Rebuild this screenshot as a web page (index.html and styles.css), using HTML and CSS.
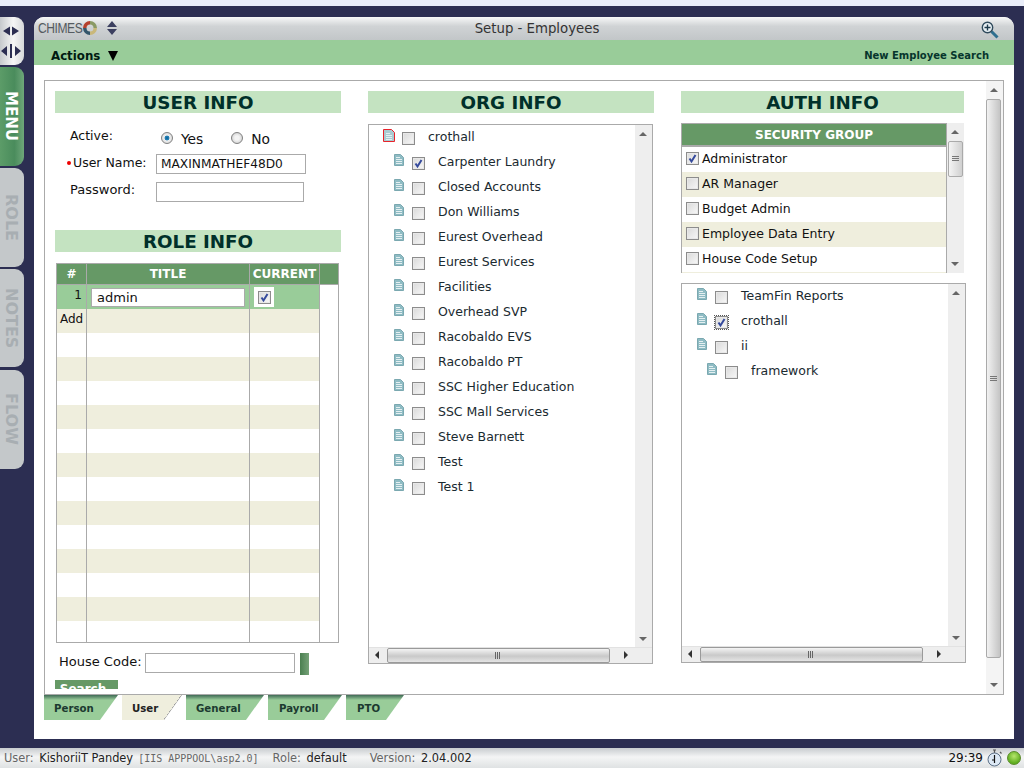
FILE: index.html
```html
<!DOCTYPE html>
<html lang="en">
<head>
  <meta charset="UTF-8" />
  <title>Setup - Employees</title>
  <link rel="stylesheet" href="styles.css">
</head>
<body>
  <svg class="defs" width="0" height="0">
    <symbol id="doc" viewBox="0 0 10 12">
      <path d="M.5.5h6l3 3v8H.5z" fill="#8fbcc4" stroke="#7aa8b0"/>
      <path d="M2 3.500h4M2 5.500h6M2 7.500h6M2 9.500h6" stroke="#e4eff1"/>
    </symbol>
    <symbol id="doc-red" viewBox="0 0 12 13">
      <path d="M.5.500h8l3 3v9H.5z" fill="#a9ccd2" stroke="#e8232a"/>
      <path d="M3 4.500h4M3 6.500h6M3 8.500h6M3 10.500h6" stroke="#e4eff1"/>
    </symbol>
    <symbol id="grip-v" viewBox="0 0 7 6">
      <path d="M0 .5h7M0 2.500h7M0 4.500h7" stroke="#777"/>
    </symbol>
    <symbol id="grip-h" viewBox="0 0 7 7">
      <path d="M.5 0v7M2.500 0v7M4.500 0v7" stroke="#666"/>
    </symbol>
  </svg>

  <div class="topstrip"></div>
  <div class="desk">
    <nav class="rail">
      <div class="rail-toggle">
        <svg width="20" height="10" viewBox="0 0 20 10"><path d="M2 5l7-4.500v9zM18 5l-7-4.500v9z" fill="#2c2e52"/></svg>
        <svg width="22" height="14" viewBox="0 0 22 14"><path d="M1 7l6-5v10zM21 7l-6-5v10z" fill="#2c2e52"/><path d="M11 0v14" stroke="#2c2e52" stroke-width="2"/></svg>
      </div>
      <div class="rail-tab rail-on"><span>MENU</span></div>
      <div class="rail-tab rail-role"><span>ROLE</span></div>
      <div class="rail-tab rail-notes"><span>NOTES</span></div>
      <div class="rail-tab rail-flow"><span>FLOW</span></div>
    </nav>

    <main class="window">
      <header class="titlebar">
        <div class="brand">
          <span class="brand-name">CHIMES</span>
          <svg width="14" height="14" viewBox="0 0 16 16" fill="none" stroke-width="4">
            <path d="M2 8a6 6 0 0 1 6-6" stroke="#b5402c"/>
            <path d="M8 2a6 6 0 0 1 6 6" stroke="#8a9a65"/>
            <path d="M14 8a6 6 0 0 1-6 6" stroke="#c9b87a"/>
            <path d="M8 14a6 6 0 0 1-6-6" stroke="#33566a"/>
          </svg>
          <svg class="brand-sort" width="12" height="16" viewBox="0 0 12 16"><path d="M6 1l5 6H1zM6 15l5-6H1z" fill="#3c4060"/></svg>
        </div>
        <div class="wintitle">Setup - Employees</div>
        <svg class="zoomicon" width="18" height="18" viewBox="0 0 18 18" fill="none">
          <path d="M10.500 10.500l6 6" stroke="#2f6f8f" stroke-width="3"/>
          <circle cx="6.500" cy="6.500" r="5.200" fill="#e8f0f4" stroke="#2f4a5c" stroke-width="1.400"/>
          <path d="M6.500 3.500v6M3.500 6.500h6" stroke="#1d3a4c" stroke-width="1.400"/>
        </svg>
      </header>
      <div class="actionbar">
        <div class="actions">Actions <span class="caret"></span></div>
        <a class="newsearch">New Employee Search</a>
      </div>

      <div class="content">
        <section class="panel">
          <div class="col col-user">
            <h2 class="sect">USER INFO</h2>
            <div class="field field-active">
              <label class="lbl">Active:</label>
              <span class="radio radio-on"></span><span class="radio-txt">Yes</span>
              <span class="radio radio-no"></span><span class="radio-txt">No</span>
            </div>
            <div class="field field-name">
              <label class="lbl"><i class="req"></i>User Name:</label>
              <input class="txt txt-name" type="text" value="MAXINMATHEF48D0">
            </div>
            <div class="field field-pass">
              <label class="lbl">Password:</label>
              <input class="txt txt-pass" type="text">
            </div>

            <h2 class="sect sect-role">ROLE INFO</h2>
            <div class="grid">
              <div class="gh"><div class="c-num">#</div><div class="c-title">TITLE</div><div class="c-cur">CURRENT</div><div class="c-end"></div></div>
              <div class="gr gr-sel"><div class="c-num num-right">1</div><div class="c-title"><input class="title-in" type="text" value="admin"></div><div class="c-cur"><span class="curbox"><input class="chk" type="checkbox" checked></span></div></div>
              <div class="gr gr-alt"><div class="c-num">Add</div><div class="c-title"></div><div class="c-cur"></div></div>
              <div class="gr"><div class="c-num"></div><div class="c-title"></div><div class="c-cur"></div></div>
              <div class="gr gr-alt"><div class="c-num"></div><div class="c-title"></div><div class="c-cur"></div></div>
              <div class="gr"><div class="c-num"></div><div class="c-title"></div><div class="c-cur"></div></div>
              <div class="gr gr-alt"><div class="c-num"></div><div class="c-title"></div><div class="c-cur"></div></div>
              <div class="gr"><div class="c-num"></div><div class="c-title"></div><div class="c-cur"></div></div>
              <div class="gr gr-alt"><div class="c-num"></div><div class="c-title"></div><div class="c-cur"></div></div>
              <div class="gr"><div class="c-num"></div><div class="c-title"></div><div class="c-cur"></div></div>
              <div class="gr gr-alt"><div class="c-num"></div><div class="c-title"></div><div class="c-cur"></div></div>
              <div class="gr"><div class="c-num"></div><div class="c-title"></div><div class="c-cur"></div></div>
              <div class="gr gr-alt"><div class="c-num"></div><div class="c-title"></div><div class="c-cur"></div></div>
              <div class="gr"><div class="c-num"></div><div class="c-title"></div><div class="c-cur"></div></div>
              <div class="gr gr-alt"><div class="c-num"></div><div class="c-title"></div><div class="c-cur"></div></div>
              <div class="gr gr-last"><div class="c-num"></div><div class="c-title"></div><div class="c-cur"></div></div>
            </div>
            <div class="house">
              <label class="lbl">House Code:</label>
              <input class="txt txt-house" type="text">
              <span class="housebtn"></span>
            </div>
            <div class="searchbtn">Search</div>
          </div>

          <div class="col col-org">
            <h2 class="sect">ORG INFO</h2>
            <div class="treebox tree-org">
              <div class="tree">
                <div class="node node-root"><svg class="doc" width="12" height="13"><use href="#doc-red"/></svg><input class="chk" type="checkbox"><span>crothall</span></div>
                <div class="node"><svg class="doc" width="10" height="12"><use href="#doc"/></svg><input class="chk" type="checkbox" checked><span>Carpenter Laundry</span></div>
                <div class="node"><svg class="doc" width="10" height="12"><use href="#doc"/></svg><input class="chk" type="checkbox"><span>Closed Accounts</span></div>
                <div class="node"><svg class="doc" width="10" height="12"><use href="#doc"/></svg><input class="chk" type="checkbox"><span>Don Williams</span></div>
                <div class="node"><svg class="doc" width="10" height="12"><use href="#doc"/></svg><input class="chk" type="checkbox"><span>Eurest Overhead</span></div>
                <div class="node"><svg class="doc" width="10" height="12"><use href="#doc"/></svg><input class="chk" type="checkbox"><span>Eurest Services</span></div>
                <div class="node"><svg class="doc" width="10" height="12"><use href="#doc"/></svg><input class="chk" type="checkbox"><span>Facilities</span></div>
                <div class="node"><svg class="doc" width="10" height="12"><use href="#doc"/></svg><input class="chk" type="checkbox"><span>Overhead SVP</span></div>
                <div class="node"><svg class="doc" width="10" height="12"><use href="#doc"/></svg><input class="chk" type="checkbox"><span>Racobaldo EVS</span></div>
                <div class="node"><svg class="doc" width="10" height="12"><use href="#doc"/></svg><input class="chk" type="checkbox"><span>Racobaldo PT</span></div>
                <div class="node"><svg class="doc" width="10" height="12"><use href="#doc"/></svg><input class="chk" type="checkbox"><span>SSC Higher Education</span></div>
                <div class="node"><svg class="doc" width="10" height="12"><use href="#doc"/></svg><input class="chk" type="checkbox"><span>SSC Mall Services</span></div>
                <div class="node"><svg class="doc" width="10" height="12"><use href="#doc"/></svg><input class="chk" type="checkbox"><span>Steve Barnett</span></div>
                <div class="node"><svg class="doc" width="10" height="12"><use href="#doc"/></svg><input class="chk" type="checkbox"><span>Test</span></div>
                <div class="node"><svg class="doc" width="10" height="12"><use href="#doc"/></svg><input class="chk" type="checkbox"><span>Test 1</span></div>
              </div>
              <div class="sb-v"><span class="arr arr-up"></span><span class="arr arr-dn"></span></div>
              <div class="sb-h">
                <span class="arr arr-lt"></span>
                <div class="h-thumb"><svg width="7" height="7"><use href="#grip-h"/></svg></div>
                <span class="arr arr-rt"></span>
              </div>
            </div>
          </div>

          <div class="col col-auth">
            <h2 class="sect">AUTH INFO</h2>
            <div class="secgroup">
              <div class="secmain">
                <div class="sechead">SECURITY GROUP</div>
                <div class="secrow"><input class="chk chk-flat" type="checkbox" checked><span>Administrator</span></div>
                <div class="secrow secrow-alt"><input class="chk chk-flat" type="checkbox"><span>AR Manager</span></div>
                <div class="secrow"><input class="chk chk-flat" type="checkbox"><span>Budget Admin</span></div>
                <div class="secrow secrow-alt"><input class="chk chk-flat" type="checkbox"><span>Employee Data Entry</span></div>
                <div class="secrow"><input class="chk chk-flat" type="checkbox"><span>House Code Setup</span></div>
                <div class="secrow-peek"></div>
              </div>
              <div class="sb-sec">
                <span class="arr arr-up"></span>
                <div class="sec-thumb"><svg width="7" height="6"><use href="#grip-v"/></svg></div>
                <span class="arr arr-dn"></span>
              </div>
            </div>
            <div class="treebox tree-auth">
              <div class="tree">
                <div class="node"><svg class="doc" width="10" height="12"><use href="#doc"/></svg><input class="chk" type="checkbox"><span>TeamFin Reports</span></div>
                <div class="node"><svg class="doc" width="10" height="12"><use href="#doc"/></svg><input class="chk chk-focus" type="checkbox" checked><span>crothall</span></div>
                <div class="node"><svg class="doc" width="10" height="12"><use href="#doc"/></svg><input class="chk" type="checkbox"><span>ii</span></div>
                <div class="node node-sub"><svg class="doc" width="10" height="12"><use href="#doc"/></svg><input class="chk" type="checkbox"><span>framework</span></div>
              </div>
              <div class="sb-v"><span class="arr arr-up"></span><span class="arr arr-dn"></span></div>
              <div class="sb-h">
                <span class="arr arr-lt"></span>
                <div class="h-thumb"><svg width="7" height="7"><use href="#grip-h"/></svg></div>
                <span class="arr arr-rt"></span>
              </div>
            </div>
          </div>

          <div class="sb-main">
            <span class="arr arr-up"></span>
            <div class="main-thumb"><svg width="7" height="6"><use href="#grip-v"/></svg></div>
            <span class="arr arr-dn"></span>
          </div>
        </section>

        <div class="tabs">
          <div class="tab tab-person">Person</div>
          <div class="tab tab-on">User</div>
          <div class="tab tab-general">General</div>
          <div class="tab tab-payroll">Payroll</div>
          <div class="tab tab-pto">PTO</div>
        </div>
      </div>
    </main>
  </div>

  <footer class="status">
    <span class="st-user"><em>User:</em> KishoriiT Pandey</span>
    <span class="st-pool">[IIS APPPOOL\asp2.0]</span>
    <span class="st-role"><em>Role:</em> default</span>
    <span class="st-ver"><em>Version:</em> 2.04.002</span>
    <span class="st-right">
      <span class="st-time">29:39</span>
      <svg width="16" height="18" viewBox="0 0 16 18" fill="none">
        <path d="M6 1h3M7.500 1v3M13 3l1.500 1.500" stroke="#555" stroke-width="1.200"/>
        <circle cx="7.500" cy="10.500" r="6.500" fill="#dce8f4" stroke="#5b6f86"/>
        <path d="M7.500 6v5M5 11h3M7.500 11v3" stroke="#111" stroke-width="1.200"/>
      </svg>
      <span class="led"></span>
    </span>
  </footer>
</body>
</html>
```

FILE: styles.css
```css
* {
  box-sizing: border-box;
}
html, body {
  height: 100%;
}
body {
  margin: 0;
  height: 768px;
  overflow: hidden;
  background: #2c2e52;
  font-family: "DejaVu Sans", Verdana, sans-serif;
  font-size: 12px;
  color: #111;
  display: flex;
  flex-direction: column;
}
.defs {
  display: block;
  height: 0;
}
.topstrip {
  height: 6px;
  background: #e9edf9;
  flex: none;
}
.desk {
  height: 742px;
  flex: none;
  padding-top: 11px;
  display: flex;
}

/* left rail */
.rail {
  width: 34px;
  flex: none;
  display: flex;
  flex-direction: column;
}
.rail-toggle {
  width: 24px;
  height: 48px;
  border-radius: 0 9px 9px 0;
  background: linear-gradient(90deg, #c6c9cc, #f6f6f6 55%, #d6d8da);
  display: flex;
  flex-direction: column;
  align-items: center;
  justify-content: center;
  gap: 8px;
  padding: 2px 3px 0 0;
}
.rail-tab {
  width: 24px;
  height: 99px;
  margin-top: 2px;
  border-radius: 0 9px 9px 0;
  background: #c4c8ca;
  display: flex;
  justify-content: center;
  padding-top: 24px;
  padding-right: 2px;
}
.rail-tab span {
  writing-mode: vertical-rl;
  font-weight: bold;
  font-size: 16px;
  color: #a8aeb2;
  line-height: 16px;
}
.rail-role {
  padding-top: 26px;
}
.rail-notes {
  height: 98px;
  padding-top: 19px;
}
.rail-flow {
  margin-top: 3px;
  padding-top: 23px;
}
.rail-on {
  background: linear-gradient(90deg, #5c9c68, #4a8c5c 60%, #6ea67a);
}
.rail-on span {
  color: #fff;
  font-size: 15px;
}

/* window */
.window {
  width: 980px;
  height: 722px;
  background: #fff;
  border-radius: 10px 10px 0 0;
  display: flex;
  flex-direction: column;
}
.titlebar {
  height: 23px;
  flex: none;
  border-radius: 10px 10px 0 0;
  background: linear-gradient(180deg, #f7f8f8 0, #d0d3d5 40%, #c2c6c8 100%);
  position: relative;
  display: flex;
  align-items: center;
  justify-content: center;
}
.brand {
  position: absolute;
  left: 4px;
  top: 3px;
  display: flex;
  align-items: center;
  gap: 1px;
}
.brand-name {
  font-family: "Liberation Sans", Arial, sans-serif;
  font-size: 14px;
  letter-spacing: -0.5px;
  color: #555b60;
  transform: scaleX(0.86);
  transform-origin: left center;
  margin-right: -7px;
}
.brand-sort {
  margin-left: 8px;
}
.wintitle {
  font-size: 13.300px;
  color: #333;
  margin-left: 26px;
}
.zoomicon {
  position: absolute;
  right: 15px;
  top: 4px;
}
.actionbar {
  height: 25px;
  flex: none;
  background: #99cc99;
  display: flex;
  align-items: center;
  justify-content: space-between;
  padding: 5px 25px 0 17px;
}
.actions {
  font-weight: bold;
  font-size: 11.800px;
  color: #001a10;
  display: flex;
  align-items: center;
  gap: 8px;
  margin-top: 1px;
}
.caret {
  width: 0;
  height: 0;
  border-left: 5px solid transparent;
  border-right: 5px solid transparent;
  border-top: 10px solid #000;
}
.newsearch {
  font-weight: bold;
  font-size: 10px;
  color: #06352c;
}

.content {
  flex: 1;
  padding: 15px 10px 0;
}
.panel {
  height: 615px;
  border: 1px solid #aaa;
  position: relative;
  display: flex;
  overflow: hidden;
  padding: 10px 0 0 10px;
}
.col {
  flex: none;
}
.col-user {
  width: 286px;
  height: 598px;
  overflow: hidden;
  margin-right: 27px;
}
.col-org {
  width: 286px;
  margin-right: 27px;
}
.col-auth {
  width: 285px;
}
.sect {
  margin: 0;
  height: 22px;
  line-height: 24px;
  background: #c4e3c1;
  text-align: center;
  font-size: 18.300px;
  font-weight: bold;
  color: #00302a;
}
.col-auth .sect {
  width: 283px;
}

/* user info */
.field {
  display: flex;
  align-items: center;
}
.lbl {
  font-size: 13px;
  color: #111;
}
.field-active {
  margin-top: 14px;
  height: 20px;
  padding-left: 15px;
}
.field-active .lbl {
  width: 91px;
  font-size: 12.500px;
  margin-top: -3px;
}
.radio {
  width: 12px;
  height: 12px;
  border-radius: 50%;
  border: 1px solid #808080;
  background: radial-gradient(circle, #f4f4f4 30%, #c4c4c4 100%);
  margin-top: 1px;
}
.radio-on {
  background: radial-gradient(circle, #0a5f96 0, #2a87bb 32%, #f0f0f0 38%, #cfcfcf 100%);
}
.radio-no {
  margin-left: 28px;
}
.radio-txt {
  font-size: 13.800px;
  margin-left: 8px;
  margin-top: 3px;
}
.field-name {
  margin-top: 7px;
  height: 20px;
  padding-left: 12px;
}
.field-name .lbl {
  width: 89px;
  font-size: 12.500px;
  white-space: nowrap;
  margin-top: -3px;
}
.req {
  display: inline-block;
  width: 4px;
  height: 4px;
  border-radius: 50%;
  background: #e00;
  margin: 0 2px 2px 0;
  vertical-align: middle;
}
.txt {
  height: 20px;
  border: 1px solid #aaa;
  background: #fff;
  font: 12.200px "DejaVu Sans", Verdana, sans-serif;
  color: #111;
  padding: 0 4px;
  outline: none;
}
.txt-name {
  width: 150px;
}
.field-pass {
  margin-top: 8px;
  height: 20px;
  padding-left: 15px;
}
.field-pass .lbl {
  width: 86px;
  margin-top: -5px;
}
.txt-pass {
  width: 148px;
}
.sect-role {
  margin-top: 28px;
}

/* role grid */
.grid {
  margin: 11px 0 0 1px;
  width: 283px;
  height: 380px;
  border: 1px solid #aaa;
  overflow: hidden;
}
.gh {
  height: 21px;
  display: flex;
  background: #669966;
  color: #fff;
  font-weight: bold;
  font-size: 12px;
  line-height: 21px;
  text-align: center;
  border-bottom: 1px solid #aaa;
}
.gh .c-cur {
  white-space: nowrap;
}
.gr {
  height: 24px;
  display: flex;
  width: 263px;
  background: #fff;
}
.gr-alt {
  background: #efeedd;
}
.gr-sel {
  background: #99cc99;
}
.gr-last {
  height: 26px;
}
.c-num {
  width: 30px;
  flex: none;
  border-right: 1px solid #aaa;
  font-size: 12px;
  line-height: 20px;
  padding-left: 3px;
}
.num-right {
  text-align: right;
  padding-right: 4px;
}
.gh .c-num {
  padding: 0;
  line-height: 21px;
}
.c-title {
  width: 163px;
  flex: none;
  border-right: 1px solid #aaa;
  padding: 3px 0 0 4px;
}
.gh .c-title {
  padding: 0;
}
.c-cur {
  width: 70px;
  flex: none;
  border-right: 1px solid #aaa;
}
.c-end {
  flex: 1;
}
.title-in {
  display: block;
  width: 154px;
  height: 19px;
  border: 1px solid #aaa;
  background: #fff;
  font: 13px "DejaVu Sans", Verdana, sans-serif;
  color: #111;
  padding: 0 5px;
  outline: none;
}
.curbox {
  display: flex;
  align-items: center;
  justify-content: center;
  width: 20px;
  height: 20px;
  margin: 2px 0 0 4px;
  background: #fff;
}

/* house code */
.house {
  display: flex;
  align-items: flex-start;
  margin-top: 10px;
  padding-left: 4px;
}
.house .lbl {
  width: 86px;
  line-height: 17px;
}
.txt-house {
  width: 150px;
}
.housebtn {
  width: 9px;
  height: 22px;
  margin-left: 5px;
  background: linear-gradient(90deg, #4a7f50, #76a278);
}
.searchbtn {
  width: 63px;
  height: 20px;
  margin-top: 5px;
  padding-right: 7px;
  background: #669966;
  color: #fff;
  font-weight: bold;
  font-size: 12px;
  text-align: center;
  line-height: 19px;
}

/* trees */
.treebox {
  margin-top: 11px;
  border: 1px solid #aaa;
  position: relative;
  overflow: hidden;
}
.tree-org {
  width: 285px;
  height: 540px;
}
.tree-auth {
  margin-top: 10px;
  width: 285px;
  height: 380px;
}
.node {
  height: 25px;
  display: flex;
  align-items: flex-start;
  padding-left: 25px;
  font-size: 12.500px;
  color: #1a2a30;
}
.node-root {
  padding-left: 14px;
}
.tree-auth .node {
  padding-left: 15px;
}
.tree-auth .node-sub {
  padding-left: 25px;
}
.doc {
  margin-top: 4px;
  flex: none;
}
.node .chk {
  margin: 7px 0 0 8px;
}
.node span {
  margin: 4px 0 0 13px;
  line-height: 16px;
}
.node-root .chk {
  margin-left: 7px;
}
.chk {
  appearance: none;
  -webkit-appearance: none;
  width: 13px;
  height: 13px;
  margin: 0;
  flex: none;
  border: 1px solid #8c8c8c;
  background: linear-gradient(135deg, #d9d9d9, #f8f8f8);
  box-shadow: inset 0 0 0 1px #e8e8e8;
}
.chk:checked {
  background: url("data:image/svg+xml,%3Csvg xmlns='http://www.w3.org/2000/svg' width='11' height='11'%3E%3Cpath d='M2.500 5.500l2 3 4-6.500' fill='none' stroke='%23354a9c' stroke-width='2'/%3E%3C/svg%3E") center no-repeat, linear-gradient(135deg, #d9d9d9, #f8f8f8);
}
.chk-focus {
  outline: 1px dotted #555;
  outline-offset: 0;
}
.chk-flat {
  margin-top: 5px;
}

/* scrollbar bits */
.sb-v {
  position: absolute;
  top: 0;
  right: 0;
  bottom: 15px;
  width: 17px;
  background: #eeeeee;
}
.sb-h {
  position: absolute;
  left: 0;
  right: 0;
  bottom: 0;
  height: 16px;
  background: #eeeeee;
  border-top: 1px solid #e2e2e2;
}
.h-thumb {
  position: absolute;
  left: 18px;
  right: 42px;
  top: 0;
  height: 15px;
  border: 1px solid #9a9a9a;
  border-radius: 2px;
  background: linear-gradient(180deg, #f4f4f4, #c9c9c9 55%, #e4e4e4);
  display: flex;
  align-items: center;
  justify-content: center;
}
.arr {
  position: absolute;
  width: 0;
  height: 0;
}
.arr-up {
  top: 7px;
  left: 4px;
  border: 4px solid transparent;
  border-top: 0;
  border-bottom: 4px solid #666;
}
.arr-dn {
  bottom: 7px;
  left: 4px;
  border: 4px solid transparent;
  border-bottom: 0;
  border-top: 4px solid #666;
}
.arr-lt {
  left: 6px;
  top: 3px;
  border: 4px solid transparent;
  border-left: 0;
  border-right: 4px solid #333;
}
.arr-rt {
  right: 24px;
  top: 3px;
  border: 4px solid transparent;
  border-right: 0;
  border-left: 4px solid #333;
}

/* security group */
.secgroup {
  margin-top: 10px;
  width: 283px;
  height: 150px;
  display: flex;
  overflow: hidden;
}
.secmain {
  width: 266px;
  flex: none;
  border: 1px solid #aaa;
  border-width: 1px 1px 0;
  overflow: hidden;
}
.sechead {
  height: 23px;
  background: #669966;
  border-bottom: 2px solid #aaa;
  color: #fff;
  font-weight: bold;
  font-size: 12px;
  line-height: 22px;
  text-align: center;
}
.secrow {
  height: 25px;
  display: flex;
  align-items: flex-start;
  padding-left: 4px;
  background: #fff;
  font-size: 12.500px;
}
.secrow span {
  margin: 4px 0 0 3px;
  line-height: 16px;
}
.secrow-alt {
  background: #efeedd;
}
.secrow-peek {
  height: 4px;
  background: #efeedd;
}
.sb-sec {
  flex: 1;
  position: relative;
  background: #eeeeee;
}
.sec-thumb {
  position: absolute;
  top: 18px;
  left: 1px;
  width: 15px;
  height: 36px;
  border: 1px solid #aaa;
  border-radius: 2px;
  background: linear-gradient(90deg, #f4f4f4, #d0d0d0);
  display: flex;
  align-items: center;
  justify-content: center;
}

/* outer scrollbar */
.sb-main {
  position: absolute;
  top: 0;
  right: 0;
  bottom: 0;
  width: 17px;
  background: #f4f4f4;
}
.main-thumb {
  position: absolute;
  top: 18px;
  left: 0;
  width: 15px;
  height: 559px;
  border: 1px solid #aaa;
  border-radius: 2px;
  background: linear-gradient(90deg, #f2f2f2, #c4c4c4);
  display: flex;
  align-items: center;
  justify-content: center;
}

/* bottom tabs */
.tabs {
  display: flex;
  gap: 4px;
}
.tab {
  height: 25px;
  padding: 8px 0 0 10px;
  font-size: 10.200px;
  font-weight: bold;
  color: #1c3a30;
  background: linear-gradient(180deg, #3f6a55 0, #99cc99 5px);
  clip-path: polygon(0 0, 100% 0, calc(100% - 18px) 100%, 0 100%);
}
.tab-person { width: 74px; }
.tab-on {
  width: 60px;
  color: #222;
  background: linear-gradient(to bottom right, #efeedd 48%, #999 48%, #999 54%, transparent 54%) right / 18px 25px no-repeat, linear-gradient(90deg, #efeedd 42px, transparent 42px);
}
.tab-general { width: 78px; }
.tab-payroll { width: 74px; padding-left: 11px; }
.tab-pto { width: 58px; padding-left: 11px; }

/* status bar */
.status {
  height: 20px;
  flex: none;
  background: linear-gradient(180deg, #c8cccf, #f4f5f5 45%, #dfe2e3);
  display: flex;
  align-items: center;
  padding: 0 3px 0 4px;
  font-size: 11.400px;
  color: #222;
}
.status em {
  font-style: normal;
  color: #666;
  margin-right: 2px;
}
.st-pool {
  margin-left: 5px;
  font-family: "DejaVu Sans Mono", monospace;
  font-size: 10px;
  color: #666;
}
.st-role {
  margin-left: 14px;
}
.st-ver {
  margin-left: 23px;
}
.st-right {
  margin-left: auto;
  display: flex;
  align-items: center;
  gap: 4px;
}
.st-time {
  font-size: 12px;
  color: #111;
}
.led {
  width: 14px;
  height: 14px;
  border-radius: 50%;
  border: 1px solid #5a8a2a;
  background: radial-gradient(circle at 50% 35%, #b6e66c, #5fae1f 70%);
}
```
